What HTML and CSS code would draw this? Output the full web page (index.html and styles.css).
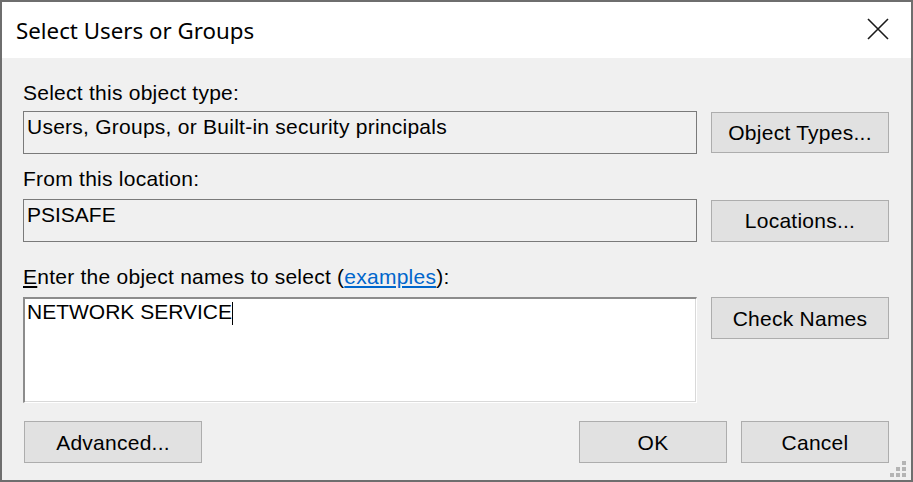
FILE: index.html
```html
<!DOCTYPE html>
<html>
<head>
<meta charset="utf-8">
<link rel="stylesheet" href="styles.css">
</head>
<body>
<div class="window">
  <div class="titlebar">
    <span class="title">Select Users or Groups</span>
    <span class="close" aria-label="Close">
      <svg width="22" height="22" viewBox="0 0 22 22"><path d="M1 1 L21 21 M21 1 L1 21" stroke="#1a1a1a" stroke-width="1.6" fill="none"/></svg>
    </span>
  </div>
  <div class="content">
    <div class="label l1">Select this object type:</div>
    <div class="row r1">
      <div class="field">Users, Groups, or Built-in security principals</div>
      <div class="btn">Object Types...</div>
    </div>
    <div class="label l2">From this location:</div>
    <div class="row r2">
      <div class="field caps">PSISAFE</div>
      <div class="btn">Locations...</div>
    </div>
    <div class="label l3"><span class="u">E</span>nter the object names to select (<span class="link">examples</span>):</div>
    <div class="row r3">
      <div class="names">NETWORK SERVICE<span class="caret"></span></div>
      <div class="btn">Check Names</div>
    </div>
    <div class="footer">
      <div class="btn adv">Advanced...</div>
      <div class="spacer"></div>
      <div class="btn small">OK</div>
      <div class="btn small">Cancel</div>
    </div>
  </div>
  <div class="grip">
    <i class="g1"></i><i class="g2"></i><i class="g3"></i><i class="g4"></i><i class="g5"></i><i class="g6"></i>
  </div>
</div>
</body>
</html>
```
FILE: styles.css
```css
html, body {
  margin: 0;
  padding: 0;
  background: #f0f0f0;
}
.window {
  width: 913px;
  height: 482px;
  box-sizing: border-box;
  border: 2px solid #6e6e6e;
  background: #f0f0f0;
  position: relative;
  font-family: "Liberation Sans", Arial, sans-serif;
  font-size: 21px;
  letter-spacing: 0.25px;
  color: #000;
}
.titlebar {
  height: 56px;
  background: #fff;
  display: flex;
  align-items: center;
  justify-content: space-between;
  padding: 0 22px 0 14px;
}
.title {
  font-family: "Noto Sans", "Open Sans", sans-serif;
  font-size: 22.3px;
  letter-spacing: 0;
  color: #000;
  margin-top: 1px;
}
.close {
  display: flex;
  width: 22px;
  height: 22px;
  margin-top: -2px;
}
.content {
  padding: 23px 22px 0 21px;
}
.label {
  line-height: 23px;
  height: 23px;
  white-space: nowrap;
}
.l1 { margin-bottom: 7px; }
.l2 { margin-top: 13px; margin-bottom: 9px; }
.l3 { margin-top: 23px; margin-bottom: 9px; }
.u { text-decoration: underline; text-underline-offset: 2px; }
.link { color: #0066cc; text-decoration: underline; text-underline-offset: 2px; }
.row {
  display: flex;
  align-items: center;
  gap: 14px;
}
.r3 { align-items: flex-start; }
.field {
  width: 674px;
  height: 43px;
  box-sizing: border-box;
  border: 1px solid #7a7a7a;
  background: #f0f0f0;
  padding: 3px 3px;
  line-height: 23px;
  white-space: nowrap;
}
.caps { letter-spacing: 0; }
.names {
  width: 674px;
  height: 106px;
  box-sizing: border-box;
  background: #fff;
  border-top: 2px solid #8c8c8c;
  border-left: 2px solid #8c8c8c;
  border-right: 1px solid #fff;
  border-bottom: 1px solid #fff;
  box-shadow: inset -1px -1px 0 #d9d9d9;
  padding: 1px 2px;
  line-height: 23px;
  white-space: nowrap;
  letter-spacing: 0;
}
.caret {
  display: inline-block;
  width: 1px;
  height: 23px;
  background: #000;
  vertical-align: top;
  margin-top: 2px;
}
.btn {
  width: 178px;
  height: 42px;
  box-sizing: border-box;
  border: 1px solid #adadad;
  background: #e1e1e1;
  display: flex;
  align-items: center;
  justify-content: center;
  line-height: 23px;
  white-space: nowrap;
  flex: none;
}
.r1 .btn { height: 41px; }
.footer {
  display: flex;
  gap: 14px;
  margin-top: 18px;
  padding-left: 1px;
}
.spacer { flex: 1; }
.btn.small { width: 148px; }
.grip {
  position: absolute;
  right: 5px;
  bottom: 3px;
  width: 16px;
  height: 16px;
}
.grip i {
  position: absolute;
  width: 4px;
  height: 4px;
  background: #b4b4b4;
}
.g1 { left: 12px; top: 0; }
.g2 { left: 6px; top: 6px; }
.g3 { left: 12px; top: 6px; }
.g4 { left: 0; top: 12px; }
.g5 { left: 6px; top: 12px; }
.g6 { left: 12px; top: 12px; }
```
